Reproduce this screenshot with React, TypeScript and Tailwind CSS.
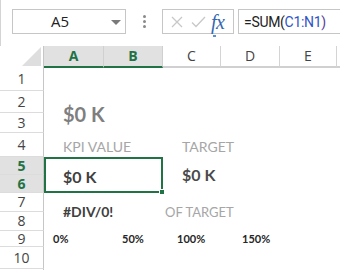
import React from "react";

const rowHeaders: { n: number; cls: string; sel?: boolean }[] = [
  { n: 1, cls: "row-start-2" },
  { n: 2, cls: "row-start-3" },
  { n: 3, cls: "row-start-4" },
  { n: 4, cls: "row-start-5" },
  { n: 5, cls: "row-start-6", sel: true },
  { n: 6, cls: "row-start-7", sel: true },
  { n: 7, cls: "row-start-8" },
  { n: 8, cls: "row-start-9" },
  { n: 9, cls: "row-start-10" },
  { n: 10, cls: "row-start-11" },
];

const colHeaders: { l: string; cls: string; sel?: boolean }[] = [
  { l: "A", cls: "col-start-2", sel: true },
  { l: "B", cls: "col-start-3", sel: true },
  { l: "C", cls: "col-start-4" },
  { l: "D", cls: "col-start-5" },
  { l: "E", cls: "col-start-6" },
];

export default function App() {
  return (
    <div className="w-[340px] h-[270px] overflow-hidden bg-white font-['Open_Sans','Noto_Sans',sans-serif] text-[#262626]">
      {/* Formula bar */}
      <div className="h-[46px] flex items-start pt-[9px] border-l border-[#d4d4d4] relative">
        <div className="ml-[11px] w-[114px] h-[25px] border border-[#c6c6c6] flex items-center relative">
          <span className="pl-[38px] text-[15px] leading-none text-[#222]">A5</span>
          <div className="absolute left-[98px] top-[10px] w-0 h-0 border-l-[5px] border-r-[5px] border-t-[5px] border-l-transparent border-r-transparent border-t-[#7a7a7a]" />
        </div>
        <div className="w-[36px] h-[25px] flex flex-col items-center justify-center gap-[2px]">
          <div className="w-[3px] h-[3px] rounded-full bg-[#8a8a8a]" />
          <div className="w-[3px] h-[3px] rounded-full bg-[#8a8a8a]" />
          <div className="w-[3px] h-[3px] rounded-full bg-[#8a8a8a]" />
        </div>
        <div className="w-[72px] h-[25px] border border-[#c6c6c6] flex items-center relative">
          <svg width="12" height="12" viewBox="0 0 12 12" className="ml-[8px]">
            <path d="M1 1 L11 11 M11 1 L1 11" stroke="#c8c8c8" strokeWidth="1.3" />
          </svg>
          <svg width="15" height="12" viewBox="0 0 15 12" className="ml-[8px]">
            <path d="M1 6.5 L5 10.5 L14 1" stroke="#c8c8c8" strokeWidth="1.3" fill="none" />
          </svg>
          <span className="ml-[5px] text-[20px] leading-none italic font-['Liberation_Serif',serif] text-[#3568b0] tracking-[-0.5px]">fx</span>
          <div className="absolute left-[50px] top-[25px] w-[3px] h-[2px] bg-[#5b8fd0]" />
        </div>
        <div className="ml-[4px] flex-1 h-[25px] border border-[#c6c6c6] border-r-0 flex items-center pl-[5px]">
          <span className="text-[14px] leading-none whitespace-nowrap font-['Roboto',sans-serif] tracking-[-0.3px]">
            <span className="text-[#222]">=SUM(</span>
            <span className="text-[#2e55c8]">C1:N1</span>
            <span className="text-[#5a3c9a]">)</span>
          </span>
        </div>
      </div>

      {/* Grid */}
      <div className="grid grid-cols-[44px_60px_59px_58px_59px_57px_1fr] grid-rows-[22px_23px_22px_20px_24px_18px_18px_19px_19px_16px_22px_20px] font-['Lato',sans-serif]">
        {/* corner */}
        <div className="col-start-1 row-start-1 border-r border-[#c6c6c6] relative bg-white">
          <svg width="20" height="19" viewBox="0 0 20 19" className="absolute right-[1px] bottom-[2px]">
            <path d="M19 0 L19 19 L0 19 Z" fill="#dedede" />
          </svg>
        </div>
        {colHeaders.map((c) => (
          <div
            key={c.l}
            className={`${c.cls} row-start-1 flex items-center justify-center border-r font-['Open_Sans',sans-serif] text-[14px] leading-none ${
              c.sel
                ? "bg-[#e1e1e1] border-[#d0d0d0] border-b-2 border-b-[#217346] text-[#217346] font-bold"
                : "bg-white border-[#d4d4d4] border-b-2 border-b-[#d0d0d0] text-[#444]"
            }`}
          >
            {c.l}
          </div>
        ))}
        <div className="col-start-7 row-start-1 border-b-2 border-b-[#d0d0d0]" />

        {rowHeaders.map((r) => (
          <div
            key={r.n}
            className={`col-start-1 ${r.cls} flex items-center justify-center border-r border-b border-r-[#c6c6c6] border-b-[#dcdcdc] font-['Open_Sans',sans-serif] text-[14px] leading-none ${
              r.sel ? "bg-[#e1e1e1] text-[#217346] font-bold" : "bg-white text-[#444]"
            }`}
          >
            {r.n}
          </div>
        ))}
        <div className="col-start-1 row-start-12 border-r border-r-[#c6c6c6]" />

        {/* Big $0 K */}
        <div className="col-start-2 col-span-2 row-start-3 row-span-2 flex items-end pl-[19px] pb-[9px]">
          <span className="text-[20px] leading-none font-bold text-[#7f7f7f] whitespace-nowrap">$0 K</span>
        </div>

        {/* KPI VALUE / TARGET */}
        <div className="col-start-2 col-span-2 row-start-5 flex items-end pl-[19px] pb-[3px]">
          <span className="text-[14px] leading-none text-[#a6a6a6] whitespace-nowrap">KPI VALUE</span>
        </div>
        <div className="col-start-4 col-span-2 row-start-5 flex items-end pl-[19px] pb-[3px]">
          <span className="text-[14px] leading-none text-[#a6a6a6] whitespace-nowrap">TARGET</span>
        </div>

        {/* Selected cell */}
        <div className="col-start-2 col-span-2 row-start-6 row-span-2 border-2 border-[#217346] relative flex items-end pl-[17px] pb-[6px]">
          <span className="text-[16px] leading-none font-bold text-[#404040] whitespace-nowrap">$0 K</span>
          <div className="absolute right-[-4px] bottom-[-4px] w-[6px] h-[6px] bg-[#217346] border border-white" />
        </div>
        <div className="col-start-4 col-span-2 row-start-6 row-span-2 flex items-end pl-[19px] pb-[10px]">
          <span className="text-[16px] leading-none font-bold text-[#4a4a4a] whitespace-nowrap">$0 K</span>
        </div>

        {/* #DIV/0! and OF TARGET */}
        <div className="col-start-2 col-span-2 row-start-8 row-span-2 flex items-end pl-[19px] pb-[12px]">
          <span className="text-[14px] leading-none font-bold text-[#404040] whitespace-nowrap">#DIV/0!</span>
        </div>
        <div className="col-start-4 col-span-2 row-start-8 row-span-2 flex items-end pl-[2px] pb-[12px]">
          <span className="text-[13px] leading-none text-[#a6a6a6] whitespace-nowrap">OF TARGET</span>
        </div>

        {/* Row 9 percentages */}
        <div className="col-start-2 row-start-10 flex items-end pl-[9px] pb-[3px]">
          <span className="text-[11px] leading-none font-bold text-[#262626] whitespace-nowrap">0%</span>
        </div>
        <div className="col-start-3 row-start-10 flex items-end pl-[18px] pb-[3px]">
          <span className="text-[11px] leading-none font-bold text-[#262626] whitespace-nowrap">50%</span>
        </div>
        <div className="col-start-4 row-start-10 flex items-end pl-[14px] pb-[3px]">
          <span className="text-[11px] leading-none font-bold text-[#262626] whitespace-nowrap">100%</span>
        </div>
        <div className="col-start-5 row-start-10 flex items-end pl-[21px] pb-[3px]">
          <span className="text-[11px] leading-none font-bold text-[#262626] whitespace-nowrap">150%</span>
        </div>
      </div>
    </div>
  );
}
